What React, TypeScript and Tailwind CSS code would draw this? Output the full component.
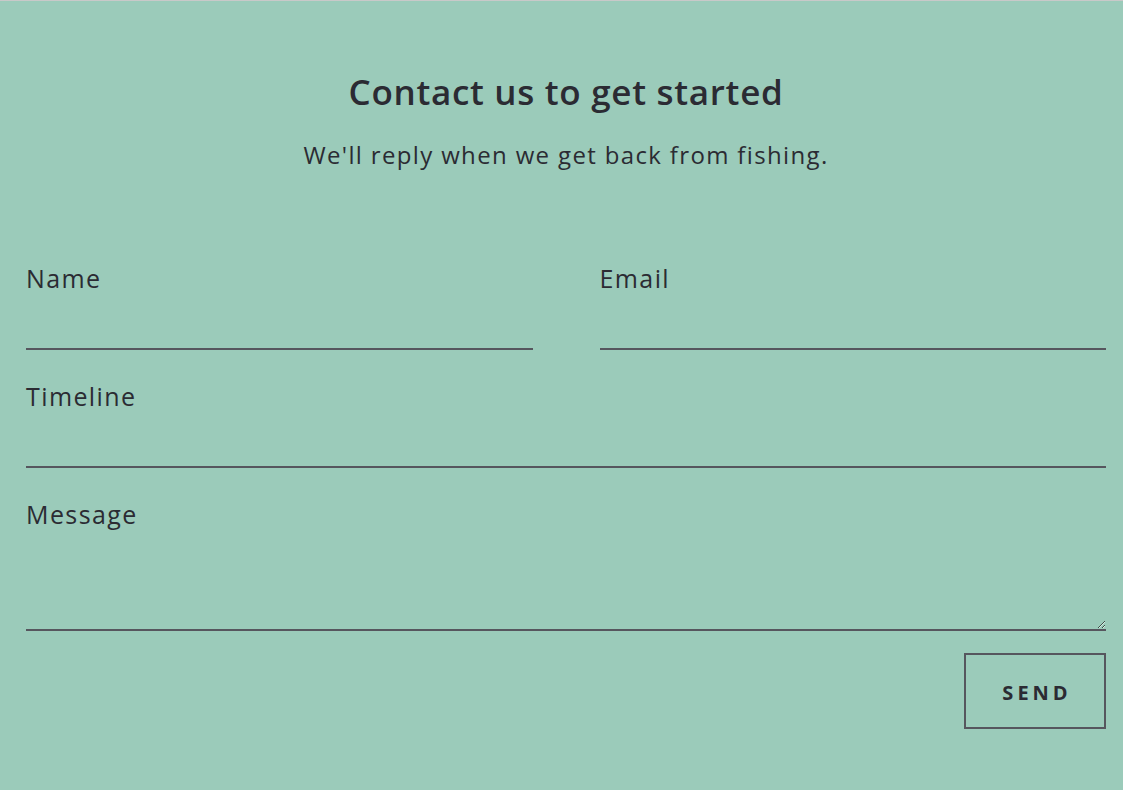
import React from 'react';

const font = { fontFamily: '"Open Sans", "Liberation Sans", sans-serif' };

export default function App() {
  return (
    <div className="h-[790px] w-full overflow-hidden bg-[#9bcbba] border-t border-[#c9c9c9] text-[#2b2b33]" style={font}>
      <div className="pl-[26px] pr-[17px] pt-[69px]">
        <h2 className="text-center text-[35px] leading-[44px] font-semibold tracking-[0.7px]">Contact us to get started</h2>
        <p className="mt-[24px] text-center text-[24px] leading-[34px] tracking-[1.35px]">We'll reply when we get back from fishing.</p>

        <form className="mt-[89px]" onSubmit={(e) => e.preventDefault()}>
          <div className="grid grid-cols-2 gap-x-[67px]">
            <Field label="Name" />
            <Field label="Email" type="email" />
          </div>
          <Field label="Timeline" />
          <label className="block">
            <span className="block text-[25px] leading-[34px] tracking-[1.4px]">Message</span>
            <textarea className="block w-full h-[100px] bg-transparent border-b-2 border-[#56565e] outline-none" />
          </label>
          <div className="mt-[22px] flex justify-end">
            <button type="submit" className="w-[142px] h-[76px] border-2 border-[#56565e] text-[20px] font-bold tracking-[4px] pl-[4px] pt-[3px]">
              SEND
            </button>
          </div>
        </form>
      </div>
    </div>
  );
}

function Field({ label, type = 'text' }: { label: string; type?: string }) {
  return (
    <label className="block mb-[29px]">
      <span className="block text-[25px] leading-[34px] tracking-[1.4px]">{label}</span>
      <input type={type} className="block w-full h-[55px] bg-transparent border-b-2 border-[#56565e] outline-none" />
    </label>
  );
}
